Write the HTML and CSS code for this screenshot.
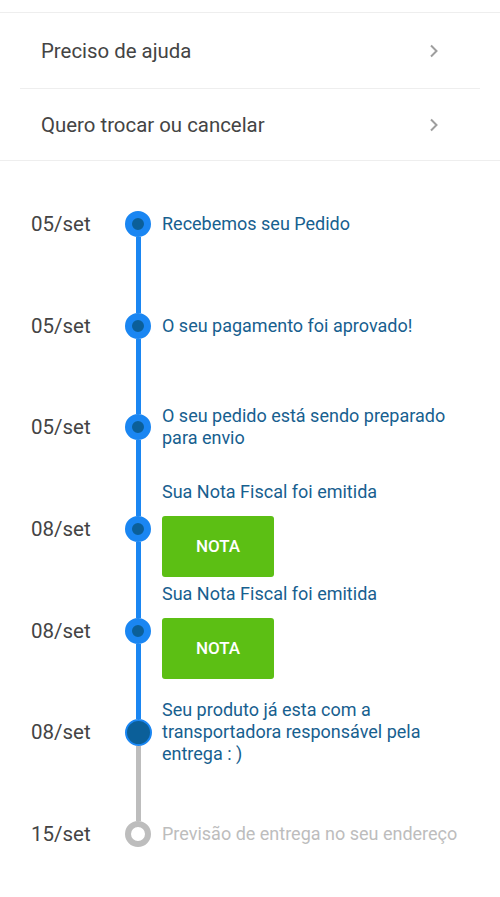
FILE: index.html
```html
<!DOCTYPE html>
<html lang="pt">
<head>
<meta charset="utf-8">
<link rel="stylesheet" href="styles.css">
</head>
<body>
<div class="page">
  <div class="menu">
    <div class="menu-item">
      <span class="menu-label">Preciso de ajuda</span>
      <svg class="chev" width="10" height="14" viewBox="0 0 10 14"><path d="M2 1.5 L7.5 7 L2 12.5" fill="none" stroke="#9e9e9e" stroke-width="2"/></svg>
    </div>
    <div class="menu-item last">
      <span class="menu-label">Quero trocar ou cancelar</span>
      <svg class="chev" width="10" height="14" viewBox="0 0 10 14"><path d="M2 1.5 L7.5 7 L2 12.5" fill="none" stroke="#9e9e9e" stroke-width="2"/></svg>
    </div>
  </div>

  <div class="timeline">
    <div class="step">
      <div class="date">05/set</div>
      <div class="marker"><span class="seg none"></span><span class="dot"></span><span class="seg blue"></span></div>
      <div class="info"><p class="msg">Recebemos seu Pedido</p></div>
    </div>
    <div class="step">
      <div class="date">05/set</div>
      <div class="marker"><span class="seg blue"></span><span class="dot"></span><span class="seg blue"></span></div>
      <div class="info"><p class="msg">O seu pagamento foi aprovado!</p></div>
    </div>
    <div class="step">
      <div class="date">05/set</div>
      <div class="marker"><span class="seg blue"></span><span class="dot"></span><span class="seg blue"></span></div>
      <div class="info"><p class="msg">O seu pedido está sendo preparado para envio</p></div>
    </div>
    <div class="step">
      <div class="date">08/set</div>
      <div class="marker"><span class="seg blue"></span><span class="dot"></span><span class="seg blue"></span></div>
      <div class="info"><p class="msg">Sua Nota Fiscal foi emitida</p><button class="nota">NOTA</button></div>
    </div>
    <div class="step">
      <div class="date">08/set</div>
      <div class="marker"><span class="seg blue"></span><span class="dot"></span><span class="seg blue"></span></div>
      <div class="info"><p class="msg">Sua Nota Fiscal foi emitida</p><button class="nota">NOTA</button></div>
    </div>
    <div class="step">
      <div class="date">08/set</div>
      <div class="marker"><span class="seg blue"></span><span class="dot current"></span><span class="seg gray"></span></div>
      <div class="info"><p class="msg">Seu produto já esta com a transportadora responsável pela entrega : )</p></div>
    </div>
    <div class="step">
      <div class="date">15/set</div>
      <div class="marker"><span class="seg gray"></span><span class="dot pending"></span><span class="seg none"></span></div>
      <div class="info"><p class="msg muted">Previsão de entrega no seu endereço</p></div>
    </div>
  </div>
</div>
</body>
</html>
```

FILE: styles.css
```css
* { box-sizing: border-box; }
html, body { margin: 0; padding: 0; background: #fff; }
body { font-family: Roboto, "Noto Sans", Arial, sans-serif; }
.page { padding-top: 12px; }

.menu {
  border-top: 1px solid #eeeeee;
  border-bottom: 1px solid #eeeeee;
}
.menu-item {
  display: flex;
  align-items: center;
  justify-content: space-between;
  height: 76px;
  margin: 0 20px;
  padding: 0 41px 0 21px;
  border-bottom: 1px solid #eeeeee;
}
.menu-item.last { border-bottom: none; height: 71px; }
.menu-label { font-size: 20.4px; color: #444444; }
.chev { display: block; }

.timeline { padding-top: 12px; }
.step {
  display: flex;
  align-items: stretch;
  height: 101.7px;
}
.date {
  width: 125px;
  padding-left: 31px;
  align-self: center;
  font-size: 20.5px;
  color: #444444;
}
.marker {
  width: 26px;
  display: flex;
  flex-direction: column;
  align-items: center;
}
.seg { flex: 1; width: 5px; }
.seg.blue { background: #1a86f2; }
.seg.gray { background: #bdbdbd; }
.seg.none { background: transparent; }
.dot {
  width: 26px;
  height: 26px;
  border-radius: 50%;
  background: #0b5f99;
  border: 7px solid #1a86f2;
  flex: none;
}
.dot.current { border-width: 2px; width: 27px; height: 27px; }
.dot.pending { background: #fff; border: 6px solid #bdbdbd; }

.info {
  align-self: center;
  padding-left: 11px;
  flex: 1;
}
.msg {
  margin: 0;
  font-size: 18px;
  line-height: 22px;
  color: #17608f;
  padding-right: 32px;
}
.msg.muted { color: #bdbdbd; }
.nota {
  display: block;
  margin-top: 13px;
  width: 112px;
  height: 61px;
  border: none;
  border-radius: 3px;
  background: #5cbf14;
  color: #fff;
  font-family: Roboto, Arial, sans-serif;
  font-weight: 500;
  font-size: 17px;
  padding: 0;
}
```
